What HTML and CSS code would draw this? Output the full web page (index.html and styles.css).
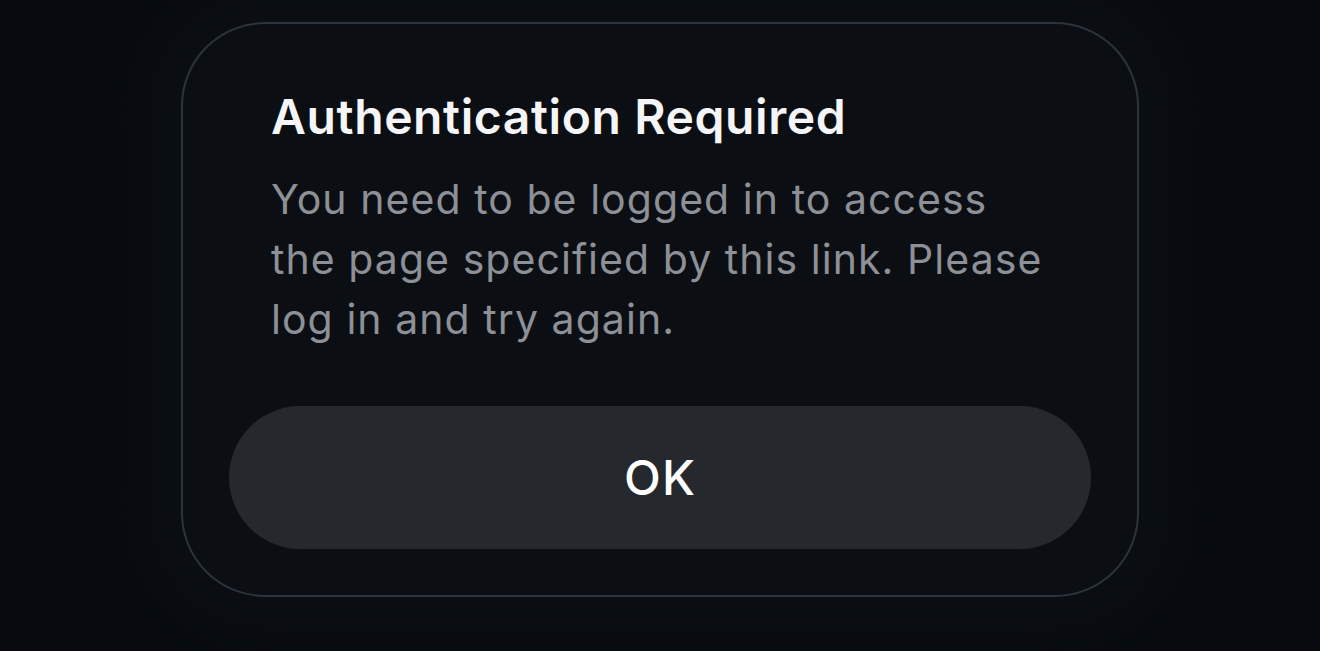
FILE: index.html
```html
<!DOCTYPE html>
<html lang="en">
<head>
<meta charset="utf-8">
<title>Authentication Required</title>
<link rel="stylesheet" href="styles.css">
</head>
<body>
  <div class="stage">
    <div class="dialog" role="alertdialog" aria-labelledby="dlg-title">
      <div class="dialog-text">
        <h1 id="dlg-title" class="dialog-title">Authentication Required</h1>
        <p class="dialog-message">You need to be logged in to access the page specified by this link. Please log in and try again.</p>
      </div>
      <button class="dialog-button" type="button">OK</button>
    </div>
  </div>
</body>
</html>
```

FILE: styles.css
```css
html, body {
  margin: 0;
  padding: 0;
  height: 100%;
  background: #070b10;
}

body {
  font-family: Inter, "Noto Sans", "Liberation Sans", sans-serif;
  -webkit-font-smoothing: antialiased;
}

.stage {
  display: flex;
  justify-content: center;
  padding-top: 22px;
}

.dialog {
  box-sizing: border-box;
  width: 958px;
  height: 575px;
  background: #0b0f13;
  border: 2px solid #2b333d;
  border-radius: 84px;
  box-shadow: 0 0 50px 40px rgba(14, 18, 22, 0.55);
  padding: 65px 46px 46px;
  display: flex;
  flex-direction: column;
}

.dialog-text {
  padding: 0 42px;
}

.dialog-title {
  margin: 0;
  font-size: 48px;
  line-height: 56px;
  font-weight: 600;
  color: #f5f5f7;
  letter-spacing: 0.6px;
}

.dialog-message {
  margin: 24px 0 0;
  font-size: 41px;
  line-height: 60px;
  font-weight: 400;
  color: #8d9096;
  letter-spacing: 1.05px;
}

.dialog-button {
  margin-top: auto;
  height: 143px;
  border: none;
  border-radius: 72px;
  background: #25292d;
  color: #ffffff;
  font-family: inherit;
  font-size: 48px;
  font-weight: 500;
  letter-spacing: 1px;
  cursor: pointer;
}
```
